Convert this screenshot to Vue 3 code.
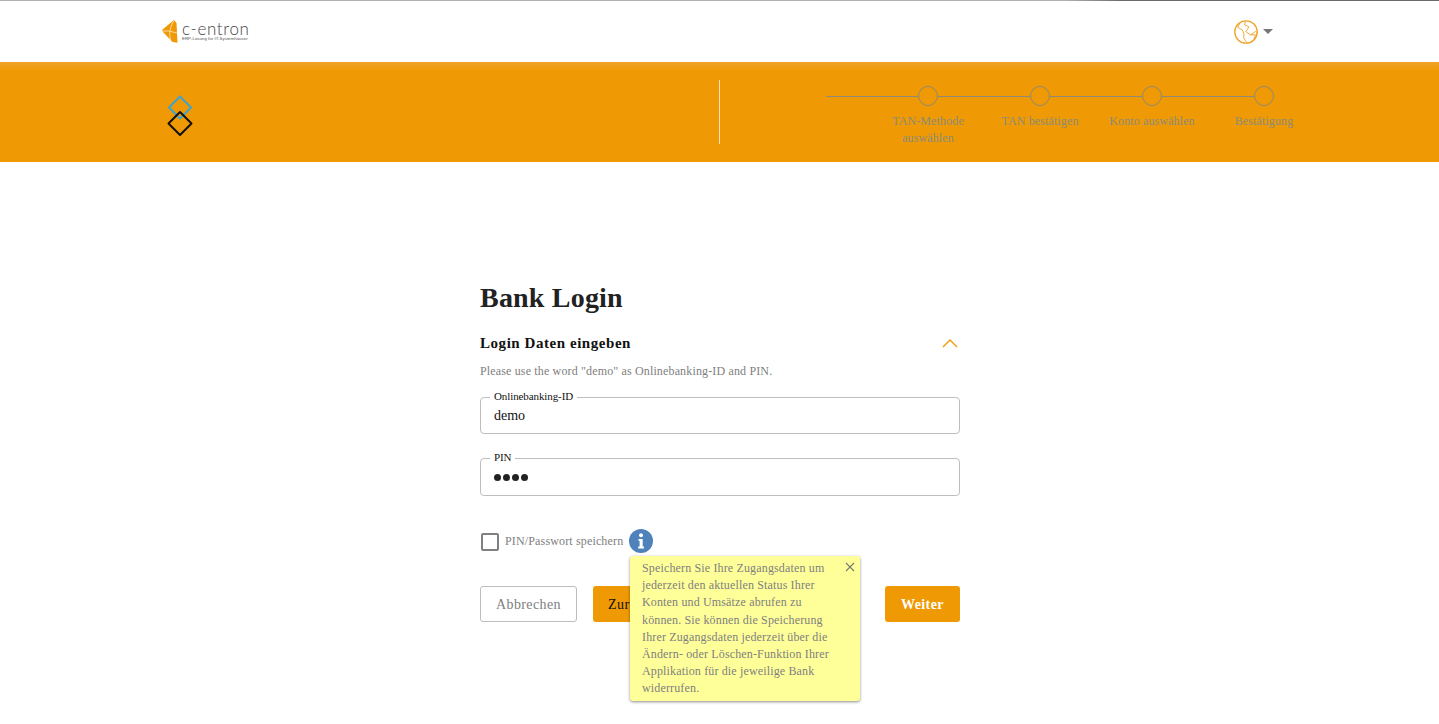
<script setup>
const steps = [
  { label: 'TAN-Methode auswählen' },
  { label: 'TAN bestätigen' },
  { label: 'Konto auswählen' },
  { label: 'Bestätigung' }
]
</script>

<template>
  <div class="page">
    <header class="topbar">
      <div class="brand">
        <svg class="brand-mark" width="16" height="23" viewBox="0 0 16 23">
          <path d="M0 10 L12 0 L14.5 3 L15.5 22.7 L10.5 22 L1 12 Z" fill="#ef9a04" />
          <path d="M0.5 11 Q6 10 15 13 M11.5 1 Q6 11 8.5 20" fill="none" stroke="#fce8c0" stroke-width="0.8" />
        </svg>
        <div class="brand-text">
          <span class="brand-name">c-entron</span>
          <span class="brand-sub">ERP-Lösung für IT-Systemhäuser</span>
        </div>
      </div>
      <div class="lang">
        <svg width="24" height="24" viewBox="0 0 24 24" fill="none" stroke="#f0a32a" stroke-width="0.9">
          <circle cx="12" cy="12" r="11.2" stroke-width="1.3" />
          <path d="M5.8 3.2 L3.8 7.5 L8.2 9.8 L9.8 13.2 L9.8 18.2 L13.2 23.2" />
          <path d="M11.5 1.5 L10.5 4.8 L14.8 6.5 L13.2 9.8 L11.5 11.5 L16.5 14.8 L21.5 11.5 L23.8 13.2" />
          <path d="M16.5 14.8 L21.5 14.8 L19.8 19.8 L16.5 23.2" />
        </svg>
        <span class="caret"></span>
      </div>
    </header>

    <section class="banner">
      <div class="banner-left">
        <svg class="diamonds" width="26" height="42" viewBox="0 0 26 42" fill="none" stroke-width="2" stroke-linejoin="round">
          <path d="M13 1.5 L24 12.5 L13 23.5 L2 12.5 Z" stroke="#3fa3cf" />
          <path d="M13 17 L24.5 28.5 L13 40 L1.5 28.5 Z" stroke="#111" />
        </svg>
      </div>
      <div class="divider"></div>
      <div class="stepper">
        <div class="track"></div>
        <div v-for="s in steps" :key="s.label" class="step">
          <span class="dot"></span>
          <span class="step-label">{{ s.label }}</span>
        </div>
      </div>
    </section>

    <main class="login">
      <h1>Bank Login</h1>
      <div class="section-head">
        <h2>Login Daten eingeben</h2>
        <svg width="16" height="9" viewBox="0 0 16 9" fill="none" stroke="#ef9a04" stroke-width="1.3">
          <path d="M1 8 L8 1 L15 8" />
        </svg>
      </div>
      <p class="hint">Please use the word "demo" as Onlinebanking-ID and PIN.</p>

      <div class="field first">
        <span class="field-label">Onlinebanking-ID</span>
        <span class="field-value">demo</span>
      </div>
      <div class="field second">
        <span class="field-label">PIN</span>
        <span class="field-dots">
          <i></i><i></i><i></i><i></i>
        </span>
      </div>

      <div class="remember">
        <span class="checkbox"></span>
        <span class="remember-label">PIN/Passwort speichern</span>
        <svg class="info" width="24" height="24" viewBox="0 0 24 24">
          <circle cx="12" cy="12" r="12" fill="#4f82bb" />
          <circle cx="12" cy="6.2" r="2" fill="#fff" />
          <path d="M9.5 10 H13.7 V17.6 H15 V19.4 H9.2 V17.6 H10.6 V11.8 H9.5 Z" fill="#fff" />
        </svg>
        <div class="tooltip">
          <svg class="tooltip-close" width="10" height="10" viewBox="0 0 10 10" stroke="#777" stroke-width="1.1">
            <path d="M1 1 L9 9 M9 1 L1 9" />
          </svg>
          Speichern Sie Ihre Zugangsdaten um jederzeit den aktuellen Status Ihrer Konten und Umsätze abrufen zu können. Sie können die Speicherung Ihrer Zugangsdaten jederzeit über die Ändern- oder Löschen-Funktion Ihrer Applikation für die jeweilige Bank widerrufen.
        </div>
      </div>

      <div class="actions">
        <button class="btn ghost">Abbrechen</button>
        <button class="btn back">Zurück</button>
        <button class="btn next">Weiter</button>
      </div>
    </main>
  </div>
</template>

<style>
html, body { margin: 0; background: #fff; overflow: hidden; }
</style>

<style scoped>
.page {
  font-family: "Liberation Serif", "Times New Roman", serif;
  color: #222;
  height: 724px;
  overflow: hidden;
}
.topbar {
  height: 61px;
  border-top: 1px solid #a9a9a9;
  border-image: linear-gradient(90deg, #b0b0b0 74%, #6a6a6a 78%, #6a6a6a 100%) 1;
  display: flex;
  align-items: center;
  justify-content: space-between;
  padding: 0 166px 0 162px;
}
.brand { display: flex; align-items: center; gap: 4px; }
.brand-text { display: flex; flex-direction: column; }
.brand-name {
  font-family: "Lato", sans-serif;
  font-weight: 300;
  font-size: 17px;
  line-height: 14px;
  color: #444;
  letter-spacing: 0.65px;
}
.brand-sub {
  font-family: "Liberation Sans", sans-serif;
  font-size: 4.4px;
  line-height: 6px;
  color: #555;
  white-space: nowrap;
}
.lang { display: flex; align-items: center; gap: 5px; }
.caret {
  width: 0;
  height: 0;
  border-left: 5px solid transparent;
  border-right: 5px solid transparent;
  border-top: 5px solid #777;
}
.banner {
  height: 100px;
  background: linear-gradient(#efa42a 0, #ef9a04 9px);
  display: flex;
  align-items: flex-start;
}
.banner-left {
  width: 719px;
  box-sizing: border-box;
  padding: 33px 0 0 167px;
}
.diamonds { display: block; }
.divider {
  width: 1px;
  height: 64px;
  margin-top: 18px;
  background: #fbe3b2;
}
.stepper {
  position: relative;
  display: flex;
  margin: 24px 0 0 106px;
  padding-left: 46px;
}
.track {
  position: absolute;
  left: 0;
  top: 9.5px;
  width: 438px;
  height: 1px;
  background: #8c8a78;
}
.step {
  position: relative;
  width: 112px;
  display: flex;
  flex-direction: column;
  align-items: center;
  text-align: center;
}
.dot {
  width: 20px;
  height: 20px;
  box-sizing: border-box;
  border: 1px solid #8c8a78;
  border-radius: 50%;
  background: #ef9a04;
}
.step-label {
  width: 96px;
  margin-top: 7px;
  font-size: 12px;
  line-height: 17px;
  letter-spacing: 0.12px;
  color: #8c8a78;
}
.login {
  width: 480px;
  margin: 0 auto;
  padding-top: 119px;
  position: relative;
  left: 0.5px;
}
h1 {
  margin: 0;
  font-size: 28px;
  line-height: 34px;
  font-weight: 700;
  letter-spacing: 0.2px;
  color: #222;
}
.section-head {
  display: flex;
  align-items: center;
  justify-content: space-between;
  margin-top: 18px;
  padding-right: 2px;
}
h2 {
  margin: 0;
  font-size: 15px;
  line-height: 20px;
  font-weight: 700;
  letter-spacing: 0.55px;
  color: #111;
}
.hint {
  margin: 10px 0 0;
  font-size: 12px;
  line-height: 16px;
  letter-spacing: 0.15px;
  color: #808080;
}
.field {
  position: relative;
  box-sizing: border-box;
  border: 1px solid #bdbdbd;
  border-radius: 4px;
  display: flex;
  align-items: center;
  padding-left: 13px;
}
.field.first { height: 37px; margin-top: 18px; }
.field.second { height: 38px; margin-top: 24px; }
.field-label {
  position: absolute;
  top: -8px;
  left: 9px;
  padding: 0 4px;
  background: #fff;
  font-size: 11px;
  line-height: 12px;
  letter-spacing: -0.1px;
  color: #111;
}
.field-value { font-size: 14px; color: #111; }
.field-dots { display: flex; gap: 2px; }
.field-dots i {
  width: 7px;
  height: 7px;
  border-radius: 50%;
  background: #222;
}
.remember {
  position: relative;
  display: flex;
  align-items: center;
  margin-top: 34px;
  padding-left: 1px;
  height: 24px;
}
.checkbox {
  width: 18px;
  height: 18px;
  box-sizing: border-box;
  border: 2px solid #808080;
  border-radius: 2px;
}
.remember-label {
  margin: -1px 0 0 6px;
  font-size: 12px;
  letter-spacing: 0.15px;
  color: #808080;
}
.info { margin: -3px 0 0 6px; }
.tooltip {
  position: absolute;
  left: 150px;
  top: 26px;
  z-index: 2;
  width: 230px;
  height: 145px;
  box-sizing: border-box;
  padding: 4px 24px 0 12px;
  background: #ffff99;
  border-radius: 3px;
  box-shadow: 0 1px 3px rgba(0, 0, 0, 0.45);
  font-size: 12px;
  line-height: 17.2px;
  letter-spacing: 0.15px;
  color: #808080;
}
.tooltip-close {
  position: absolute;
  top: 6px;
  right: 5px;
}
.actions {
  display: flex;
  margin-top: 32px;
  height: 36px;
}
.btn {
  height: 36px;
  box-sizing: border-box;
  border-radius: 3px;
  font-family: inherit;
  font-size: 14px;
  letter-spacing: 0.4px;
  padding: 1px 0 0;
  cursor: pointer;
}
.ghost {
  width: 97px;
  background: #fff;
  border: 1px solid #bdbdbd;
  color: #808080;
}
.back {
  width: 73px;
  margin-left: 16px;
  background: #ef9a04;
  border: 0;
  color: #111;
}
.next {
  width: 75px;
  margin-left: auto;
  background: #ef9a04;
  border: 0;
  color: #fff;
  font-weight: 700;
}
</style>
